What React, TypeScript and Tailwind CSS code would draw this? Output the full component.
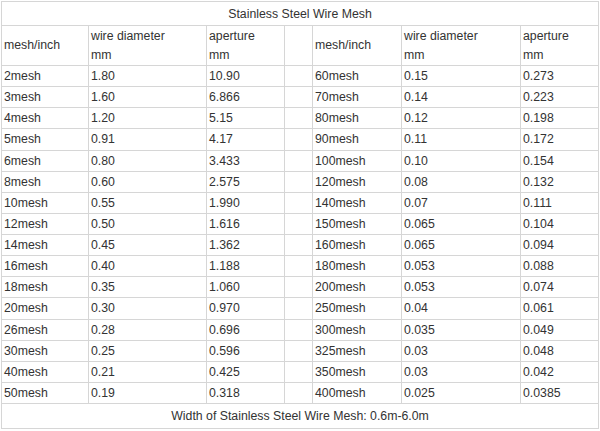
const rows: [string, string, string, string, string, string][] = [
  ["2mesh", "1.80", "10.90", "60mesh", "0.15", "0.273"],
  ["3mesh", "1.60", "6.866", "70mesh", "0.14", "0.223"],
  ["4mesh", "1.20", "5.15", "80mesh", "0.12", "0.198"],
  ["5mesh", "0.91", "4.17", "90mesh", "0.11", "0.172"],
  ["6mesh", "0.80", "3.433", "100mesh", "0.10", "0.154"],
  ["8mesh", "0.60", "2.575", "120mesh", "0.08", "0.132"],
  ["10mesh", "0.55", "1.990", "140mesh", "0.07", "0.111"],
  ["12mesh", "0.50", "1.616", "150mesh", "0.065", "0.104"],
  ["14mesh", "0.45", "1.362", "160mesh", "0.065", "0.094"],
  ["16mesh", "0.40", "1.188", "180mesh", "0.053", "0.088"],
  ["18mesh", "0.35", "1.060", "200mesh", "0.053", "0.074"],
  ["20mesh", "0.30", "0.970", "250mesh", "0.04", "0.061"],
  ["26mesh", "0.28", "0.696", "300mesh", "0.035", "0.049"],
  ["30mesh", "0.25", "0.596", "325mesh", "0.03", "0.048"],
  ["40mesh", "0.21", "0.425", "350mesh", "0.03", "0.042"],
  ["50mesh", "0.19", "0.318", "400mesh", "0.025", "0.0385"],
];

const cell = "border border-[#d6d6d6] px-[2px] py-0 text-left align-middle font-normal";
const head = "border border-[#d6d6d6] px-[2px] py-0 text-left align-middle font-normal leading-[19px]";

export default function App() {
  return (
    <div className="h-[431px] w-[600px] bg-white pl-[1px] pt-[1px] font-['Liberation_Sans',Arial,sans-serif] text-[12.3px] leading-[18px] text-[#333]">
      <table className="w-[597px] table-fixed border-collapse">
        <colgroup>
          <col className="w-[87px]" />
          <col className="w-[118px]" />
          <col className="w-[78px]" />
          <col className="w-[28px]" />
          <col className="w-[89px]" />
          <col className="w-[119px]" />
          <col className="w-[78px]" />
        </colgroup>
        <thead>
          <tr className="h-[24px]">
            <th colSpan={7} className="border border-[#d6d6d6] text-center align-middle font-normal">
              Stainless Steel Wire Mesh
            </th>
          </tr>
          <tr className="h-[40px]">
            <th className={head}>mesh/inch</th>
            <th className={head}>
              wire diameter
              <br />
              mm
            </th>
            <th className={head}>
              aperture
              <br />
              mm
            </th>
            <th className={head}></th>
            <th className={head}>mesh/inch</th>
            <th className={head}>
              wire diameter
              <br />
              mm
            </th>
            <th className={head}>
              aperture
              <br />
              mm
            </th>
          </tr>
        </thead>
        <tbody>
          {rows.map((r) => (
            <tr key={r[0]} className="h-[21.125px]">
              <td className={cell}>{r[0]}</td>
              <td className={cell}>{r[1]}</td>
              <td className={cell}>{r[2]}</td>
              <td className={cell}></td>
              <td className={cell}>{r[3]}</td>
              <td className={cell}>{r[4]}</td>
              <td className={cell}>{r[5]}</td>
            </tr>
          ))}
          <tr className="h-[25px]">
            <td colSpan={7} className="border border-[#d6d6d6] text-center align-middle">
              Width of Stainless Steel Wire Mesh: 0.6m-6.0m
            </td>
          </tr>
        </tbody>
      </table>
    </div>
  );
}
